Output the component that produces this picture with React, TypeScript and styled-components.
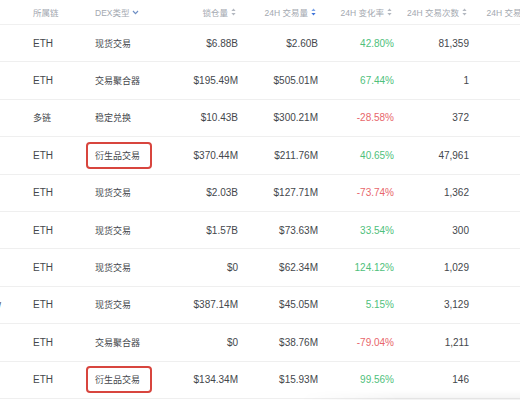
import React from "react";
import styled, { createGlobalStyle } from "styled-components";

const Global = createGlobalStyle`
  html, body { margin: 0; padding: 0; background: #ffffff; }
  body { font-family: "Liberation Sans", "Noto Sans CJK SC", sans-serif; overflow: hidden; }
`;

const COLS = "33px 62px 75px 68px 80px 76px 75px 88px";

const Page = styled.div`
  position: relative;
  width: 520px;
  height: 400px;
  overflow: hidden;
  background: #fff;
`;

const Table = styled.div`
  display: flex;
  flex-direction: column;
  width: 557px;
`;

const HeadRow = styled.div`
  display: grid;
  grid-template-columns: ${COLS};
  height: 25px;
  align-items: center;
  border-bottom: 1px solid #f0f0f0;
  box-sizing: border-box;
`;

const Row = styled.div`
  display: grid;
  grid-template-columns: ${COLS};
  height: 37.4px;
  align-items: center;
  border-bottom: 1px solid #efefef;
  box-sizing: border-box;
`;

const HeadCell = styled.div<{ $right?: boolean }>`
  display: flex;
  align-items: center;
  justify-content: ${(p) => (p.$right ? "flex-end" : "flex-start")};
  gap: 3px;
  font-size: 8.5px;
  color: #a3a8b0;
  white-space: nowrap;
  padding-right: ${(p) => (p.$right ? "2px" : "0")};
`;

const Cell = styled.div<{ $right?: boolean; $tone?: "up" | "down" }>`
  display: flex;
  align-items: center;
  justify-content: ${(p) => (p.$right ? "flex-end" : "flex-start")};
  font-size: 10px;
  color: ${(p) => (p.$tone === "up" ? "#4fbf7c" : p.$tone === "down" ? "#e8666b" : "#44474c")};
  white-space: nowrap;
`;

const CnText = styled.span`
  font-size: 9px;
`;

const LeadCell = styled.div`
  display: flex;
  justify-content: flex-end;
  overflow: hidden;
  padding-right: 32px;
  font-size: 10px;
  color: #44474c;
  white-space: nowrap;
`;

const Marked = styled.span`
  display: inline-flex;
  align-items: center;
  height: 23px;
  padding: 0 10px 0 7px;
  margin-left: -9px;
  border: 2px solid #d8453e;
  border-radius: 4px;
  font-size: 9px;
`;

const Shade = styled.div`
  position: absolute;
  left: 300px;
  right: 0;
  bottom: 0;
  height: 10px;
  background: linear-gradient(180deg, rgba(0, 0, 0, 0) 0%, rgba(0, 0, 0, 0.05) 100%);
  -webkit-mask-image: linear-gradient(90deg, transparent 0%, #000 45%);
  mask-image: linear-gradient(90deg, transparent 0%, #000 45%);
  pointer-events: none;
`;

const SortIcon = ({ active }: { active?: boolean }) => (
  <svg width="5" height="8" viewBox="0 0 5 8">
    <path d="M2.5 0.5 L4.6 3 H0.4 Z" fill={active ? "#7da4e8" : "#b3b8c0"} />
    <path d="M2.5 7.5 L4.6 5 H0.4 Z" fill={active ? "#3f74d9" : "#b3b8c0"} />
  </svg>
);

const Chevron = () => (
  <svg width="7" height="5" viewBox="0 0 7 5">
    <path d="M1 1 L3.5 3.6 L6 1" fill="none" stroke="#6f8fc4" strokeWidth="1.2" />
  </svg>
);

type R = {
  lead?: string;
  chain: string;
  dex: string;
  marked?: boolean;
  tvl: string;
  vol: string;
  chg: string;
  cnt: string;
  extra?: string;
};

const rows: R[] = [
  { chain: "ETH", dex: "现货交易", tvl: "$6.88B", vol: "$2.60B", chg: "42.80%", cnt: "81,359", extra: "4,512" },
  { chain: "ETH", dex: "交易聚合器", tvl: "$195.49M", vol: "$505.01M", chg: "67.44%", cnt: "1", extra: "1" },
  { chain: "多链", dex: "稳定兑换", tvl: "$10.43B", vol: "$300.21M", chg: "-28.58%", cnt: "372", extra: "85" },
  { chain: "ETH", dex: "衍生品交易", marked: true, tvl: "$370.44M", vol: "$211.76M", chg: "40.65%", cnt: "47,961", extra: "912" },
  { chain: "ETH", dex: "现货交易", tvl: "$2.03B", vol: "$127.71M", chg: "-73.74%", cnt: "1,362", extra: "204" },
  { chain: "ETH", dex: "现货交易", tvl: "$1.57B", vol: "$73.63M", chg: "33.54%", cnt: "300", extra: "51" },
  { chain: "ETH", dex: "现货交易", tvl: "$0", vol: "$62.34M", chg: "124.12%", cnt: "1,029", extra: "96" },
  { lead: "Hashflow", chain: "ETH", dex: "现货交易", tvl: "$387.14M", vol: "$45.05M", chg: "5.15%", cnt: "3,129", extra: "310" },
  { chain: "ETH", dex: "交易聚合器", tvl: "$0", vol: "$38.76M", chg: "-79.04%", cnt: "1,211", extra: "88" },
  { chain: "ETH", dex: "衍生品交易", marked: true, tvl: "$134.34M", vol: "$15.93M", chg: "99.56%", cnt: "146", extra: "27" },
];

export default function App() {
  return (
    <Page>
      <Global />
      <Table>
        <HeadRow>
          <HeadCell />
          <HeadCell>所属链</HeadCell>
          <HeadCell>
            DEX类型 <Chevron />
          </HeadCell>
          <HeadCell $right>
            锁仓量 <SortIcon />
          </HeadCell>
          <HeadCell $right>
            24H 交易量 <SortIcon active />
          </HeadCell>
          <HeadCell $right>
            24H 变化率 <SortIcon />
          </HeadCell>
          <HeadCell $right>
            24H 交易次数 <SortIcon />
          </HeadCell>
          <HeadCell $right>
            24H 交易用户数 <SortIcon />
          </HeadCell>
        </HeadRow>
        {rows.map((r, i) => (
          <Row key={i}>
            <LeadCell>{r.lead ?? ""}</LeadCell>
            <Cell>{/^[A-Z]/.test(r.chain) ? r.chain : <CnText>{r.chain}</CnText>}</Cell>
            <Cell>{r.marked ? <Marked>{r.dex}</Marked> : <CnText>{r.dex}</CnText>}</Cell>
            <Cell $right>{r.tvl}</Cell>
            <Cell $right>{r.vol}</Cell>
            <Cell $right $tone={r.chg.startsWith("-") ? "down" : "up"}>
              {r.chg}
            </Cell>
            <Cell $right>{r.cnt}</Cell>
            <Cell $right>{r.extra}</Cell>
          </Row>
        ))}
      </Table>
      <Shade />
    </Page>
  );
}
